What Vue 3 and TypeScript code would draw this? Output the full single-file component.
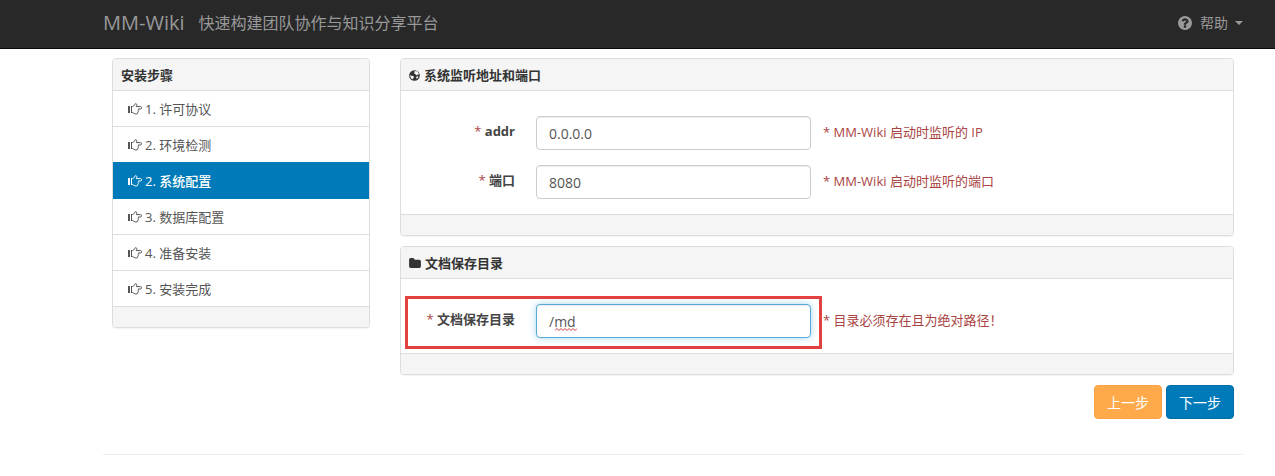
<script setup lang="ts">
import { ref } from 'vue'

interface Step {
  label: string
  active?: boolean
}

const steps: Step[] = [
  { label: '1. 许可协议' },
  { label: '2. 环境检测' },
  { label: '2. 系统配置', active: true },
  { label: '3. 数据库配置' },
  { label: '4. 准备安装' },
  { label: '5. 安装完成' },
]

const addr = ref('0.0.0.0')
const port = ref('8080')
const docRoot = ref('/md')
</script>

<template>
  <div class="page">
    <header class="navbar">
      <a class="brand" href="#">MM-Wiki</a>
      <span class="tagline">快速构建团队协作与知识分享平台</span>
      <a class="help-menu" href="#">
        <svg class="icon-help" viewBox="128 128 1536 1536" aria-hidden="true">
          <path fill="currentColor" d="M1024 1376v-192q0-14-9-23t-23-9h-192q-14 0-23 9t-9 23v192q0 14 9 23t23 9h192q14 0 23-9t9-23zm256-672q0-88-55.500-163t-138.500-116-170-41q-243 0-371 213-15 24 8 42l132 100q7 6 19 6 16 0 25-12 53-68 86-92 34-24 86-24 48 0 85.500 26t37.500 59q0 38-20 61t-68 45q-63 28-115.500 86.500t-52.500 125.500v36q0 14 9 23t23 9h192q14 0 23-9t9-23q0-19 21.500-49.500t54.500-49.500q32-18 49-28.500t46-35 44.500-48 28-60.500 12.500-81zm384 192q0 209-103 385.500t-279.500 279.500-385.500 103-385.500-103-279.500-279.500-103-385.500 103-385.500 279.500-279.500 385.500-103 385.500 103 279.500 279.500 103 385.500z" />
        </svg>
        <span>帮助</span>
        <span class="caret"></span>
      </a>
    </header>

    <main class="content">
      <div class="columns">
        <nav class="panel steps" aria-label="安装步骤">
          <h2 class="panel-head">安装步骤</h2>
          <ul class="step-list">
            <li v-for="step in steps" :key="step.label">
              <a class="step" :class="{ active: step.active }" href="#">
                <svg class="icon-hand" viewBox="0 0 14 12" aria-hidden="true">
                  <path fill="currentColor" d="M0 3h2v7H0z" />
                  <path fill="none" stroke="currentColor" d="M3.500 3v7M3.500 9.500h1.200c1 .6 1.800 1.500 3.300 1.500 1.300 0 2-.6 1.800-1.700.6-.5.700-1.200.4-1.800.4-.5.400-1.100.1-1.500h2.200c1.400 0 1.400-2.400 0-2.400H8.300c.3-.9.700-1.500.4-2.300-.3-.8-1.600-.8-1.900 0C6.300 2.600 5.500 3.300 4.600 3.500H3.500" />
                </svg>
                <span>{{ step.label }}</span>
              </a>
            </li>
          </ul>
          <div class="panel-foot"></div>
        </nav>

        <form class="settings" @submit.prevent>
          <section class="panel">
            <h2 class="panel-head">
              <svg class="icon-globe" viewBox="0 0 12 12" aria-hidden="true">
                <circle cx="6" cy="6" r="5.800" fill="currentColor" />
                <path fill="#f5f5f5" d="M5.600 1.600 7.800 1.200l1.600.8 1.200 1.600.3 1.400-1.300-.3-.6.900-1.300-.2-.8-1-1.300-.2.500-1.200z" />
                <path fill="#f5f5f5" d="M1.300 5.400 2.600 6.200l1.800.3 1 .9-.3 1.200-.9.700-.3 1.100-1.400-1-1-1.700z" />
                <path fill="#f5f5f5" d="m8.200 7 1.700-.2.300.8-.9 1.500-1.100.5-.4-1.200z" />
              </svg>
              <span>系统监听地址和端口</span>
            </h2>
            <div class="panel-body">
              <div class="field">
                <label for="addr"><span class="required">*</span> addr</label>
                <input id="addr" v-model="addr" type="text" />
                <span class="hint">* MM-Wiki 启动时监听的 IP</span>
              </div>
              <div class="field">
                <label for="port"><span class="required">*</span> 端口</label>
                <input id="port" v-model="port" type="text" />
                <span class="hint">* MM-Wiki 启动时监听的端口</span>
              </div>
            </div>
            <div class="panel-foot"></div>
          </section>

          <section class="panel">
            <h2 class="panel-head">
              <svg class="icon-folder" viewBox="64 128 1664 1408" aria-hidden="true">
                <path fill="currentColor" d="M1728 608v704q0 92-66 158t-158 66h-1216q-92 0-158-66t-66-158v-960q0-92 66-158t158-66h320q92 0 158 66t66 158v32h672q92 0 158 66t66 158z" />
              </svg>
              <span>文档保存目录</span>
            </h2>
            <div class="panel-body">
              <div class="field marked">
                <label for="doc-root"><span class="required">*</span> 文档保存目录</label>
                <div class="input-wrap">
                  <input id="doc-root" v-model="docRoot" class="focused" type="text" spellcheck="false" />
                  <svg class="squiggle" viewBox="0 0 22 3" aria-hidden="true">
                    <path fill="none" stroke="#d03a3a" d="M0 2.500 2 .5l2 2 2-2 2 2 2-2 2 2 2-2 2 2 2-2 2 2 2-2" />
                  </svg>
                </div>
                <span class="hint">* 目录必须存在且为绝对路径！</span>
              </div>
            </div>
            <div class="panel-foot"></div>
          </section>

          <div class="actions">
            <button class="btn prev" type="button">上一步</button>
            <button class="btn next" type="submit">下一步</button>
          </div>
        </form>
      </div>
      <hr />
    </main>
  </div>
</template>

<style>
body {
  margin: 0;
  background: #fff;
}
</style>

<style scoped>
.page,
.page * {
  box-sizing: border-box;
}

.page {
  font-family: "Open Sans", "Noto Sans CJK SC", sans-serif;
  font-size: 13px;
  line-height: 20px;
  color: #555;
}

a {
  color: inherit;
  text-decoration: none;
}

.navbar {
  display: flex;
  align-items: center;
  height: 49px;
  padding: 0 32px 2px 103px;
  background: #282828;
  border-bottom: 1px solid #080808;
  color: #999;
}

.brand {
  font-size: 20px;
}

.tagline {
  margin-left: 14px;
  font-size: 16px;
}

.help-menu {
  display: flex;
  align-items: center;
  margin-left: auto;
  font-size: 14px;
}

.icon-help {
  width: 14px;
  height: 14px;
  margin-right: 8px;
}

.caret {
  margin-left: 7px;
  border: 4px solid transparent;
  border-top-color: currentColor;
  border-bottom: 0;
}

.content {
  padding: 9px 32px 0 103px;
}

.columns {
  display: grid;
  grid-template-columns: 258fr 834fr;
  align-items: start;
  gap: 30px;
  padding: 0 9px;
}

.panel {
  border: 1px solid #ddd;
  border-radius: 4px;
  background: #fff;
  box-shadow: 0 1px 1px rgba(0, 0, 0, 0.05);
  overflow: hidden;
}

.panel-head {
  display: flex;
  align-items: center;
  gap: 4px;
  margin: 0;
  padding: 6px 8px 5px;
  border-bottom: 1px solid #ddd;
  background: #f5f5f5;
  color: #333;
  font-size: 13px;
  font-weight: 700;
}

.panel-foot {
  height: 20px;
  background: #f5f5f5;
}

.settings .panel-foot {
  height: 21px;
  border-top: 1px solid #ddd;
}

.icon-globe {
  width: 11px;
  height: 11px;
}

.icon-folder {
  width: 12px;
  height: 10px;
}

.step-list {
  margin: 0;
  padding: 0;
  list-style: none;
}

.step {
  display: flex;
  align-items: center;
  gap: 3px;
  padding: 8px 15px 7px;
  border-bottom: 1px solid #ddd;
}

.step.active {
  margin-top: -1px;
  padding-top: 9px;
  border-color: #007ab8;
  background: #007ab8;
  color: #fff;
  font-weight: 500;
}

.icon-hand {
  width: 14px;
  height: 12px;
}

.settings {
  display: flex;
  flex-direction: column;
  gap: 10px;
}

.panel-body {
  display: flex;
  flex-direction: column;
  gap: 15px;
  padding: 25px 0 15px;
}

.field {
  position: relative;
  display: grid;
  grid-template-columns: 135fr 275fr 422fr;
}

.field label {
  padding: 5px 21px 0 0;
  color: #444;
  font-weight: 700;
  text-align: right;
}

.required {
  color: #a94442;
  font-weight: 400;
}

.field input {
  width: 100%;
  height: 34px;
  padding: 0 12px;
  border: 1px solid #ccc;
  border-radius: 4px;
  background: #fff;
  box-shadow: inset 0 1px 1px rgba(0, 0, 0, 0.075);
  color: #555;
  font-family: inherit;
  font-size: 14px;
  outline: none;
}

.field input.focused {
  border-color: #5aa9d6;
  box-shadow: inset 0 1px 1px rgba(0, 0, 0, 0.075), 0 0 7px rgba(102, 190, 233, 0.6);
}

.input-wrap {
  position: relative;
}

.squiggle {
  position: absolute;
  left: 19px;
  top: 24px;
  width: 22px;
  height: 3px;
}

.hint {
  padding: 6px 0 0 12px;
  color: #a94442;
}

.marked::after {
  content: "";
  position: absolute;
  grid-column: 1 / 3;
  inset: -8px -11px -11px 4px;
  border: 3px solid #e34040;
  pointer-events: none;
}

.actions {
  display: flex;
  justify-content: flex-end;
  gap: 4px;
}

.btn {
  height: 34px;
  padding: 0 12px;
  border: 1px solid;
  border-radius: 4px;
  color: #fff;
  font-family: inherit;
  font-size: 14px;
}

.prev {
  border-color: #f9a245;
  background: #ffaa4a;
}

.next {
  border-color: #006da6;
  background: #007ab8;
}

hr {
  height: 1px;
  margin: 35px 0 21px;
  border: 0;
  background: #eee;
}
</style>
